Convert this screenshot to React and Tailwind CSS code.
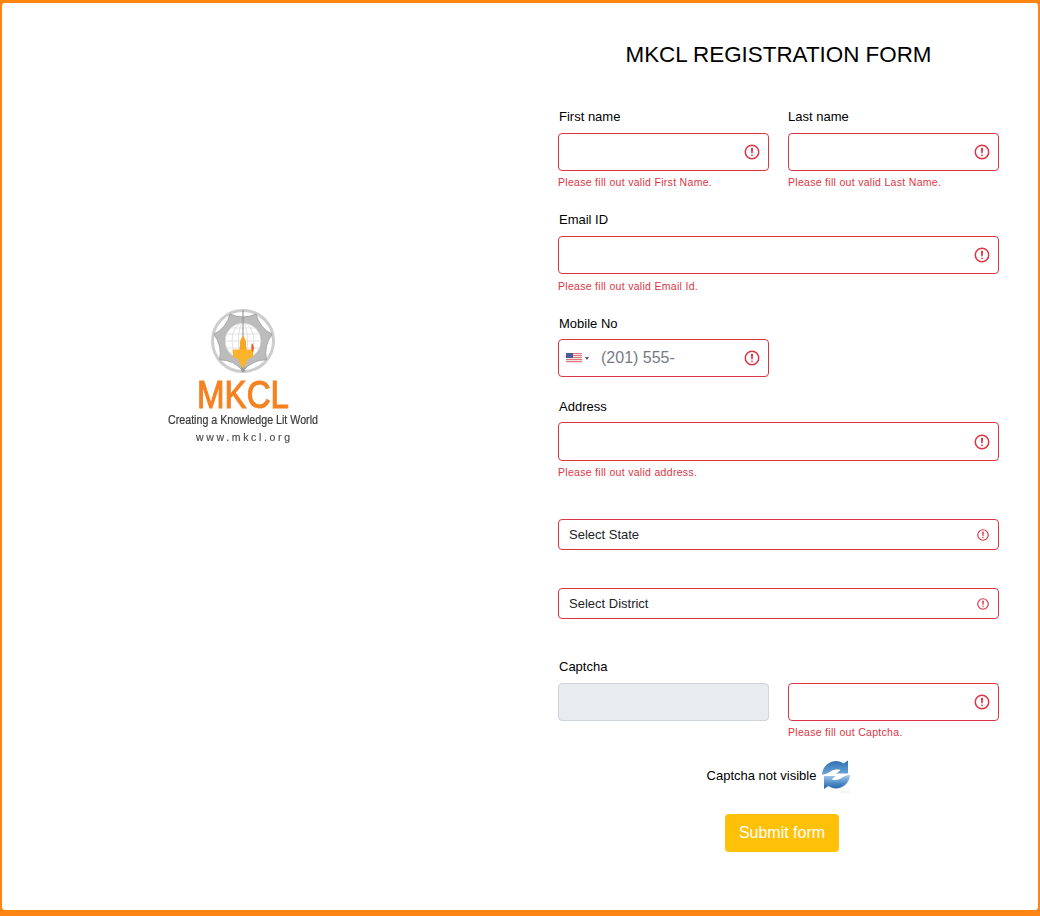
import React from "react";

const ErrIcon = ({ size = 18 }) => (
  <svg width={size} height={size} viewBox="0 0 12 12" fill="none" stroke="#dc3545" className="shrink-0">
    <circle cx="6" cy="6" r="4.5" />
    <path strokeLinejoin="round" d="M5.8 3.6h.4L6 6.5z" />
    <circle cx="6" cy="8.2" r=".6" fill="#dc3545" stroke="none" />
  </svg>
);

const Label = ({ children, className = "pl-px" }) => (
  <label className={"block h-[21px] text-[13px] leading-[21px] text-black " + className}>{children}</label>
);

const Err = ({ children, className = "mt-[3px]" }) => (
  <div className={"h-4 text-[10.5px] leading-4 tracking-[0.3px] text-[#dc3545] " + className}>{children}</div>
);

const Input = ({ className = "h-[38px]" }) => (
  <div className={"flex items-center rounded border border-[#dc3545] bg-white pl-3 pr-[7.5px] " + className}>
    <input className="min-w-0 flex-1 bg-transparent text-[16px] outline-none" aria-label="field" />
    <ErrIcon />
  </div>
);

const SelectBox = ({ children, className = "" }) => (
  <div className={"flex h-[31px] items-center justify-between rounded border border-[#dc3545] bg-white pl-[10px] pr-[8px] text-[13px] text-[#212529] " + className}>
    <span>{children}</span>
    <ErrIcon size={14} />
  </div>
);

const Flag = () => (
  <svg width="16" height="10" viewBox="0 0 16 10" className="shrink-0">
    <rect width="16" height="10" fill="#f6e3e3" />
    {[0, 2, 4, 6, 8].map((y) => (
      <rect key={y} y={y} width="16" height="1" fill="#d9787c" />
    ))}
    <rect width="7" height="5" fill="#4d5c94" />
  </svg>
);

const star = (() => {
  const n = 7;
  let d = "";
  for (let i = 0; i < n; i++) {
    const a = ((90 + (i * 360) / n) * Math.PI) / 180;
    const b = ((90 + ((i + 0.5) * 360) / n) * Math.PI) / 180;
    const b2 = ((90 + ((i + 1) * 360) / n) * Math.PI) / 180;
    const p = (ang, r) => (r * Math.cos(ang)).toFixed(1) + " " + (r * Math.sin(ang)).toFixed(1);
    if (i === 0) d += "M" + p(a, 30);
    d += "Q" + p(b, 21) + " " + p(b2, 30);
  }
  return d + "Z";
})();

const Logo = () => (
  <svg width="160" height="140" viewBox="163 305 160 140" className="blur-[0.4px]">
    <g transform="translate(243 341)">
      <circle r="30.5" fill="#fff" stroke="#cdcdcd" strokeWidth="3" />
      <path d={star} fill="#bcbcbc" stroke="#9a9a9a" strokeWidth="0.8" strokeLinejoin="round" />
      <circle r="18" fill="#fff" stroke="#b0b0b0" strokeWidth="0.5" />
      <g fill="none" stroke="#dedede" strokeWidth="0.9">
        <ellipse rx="11" ry="18" />
        <ellipse rx="4.500" ry="18" />
        <path d="M-17-7H17M-18 0H18M-17 7H17M-12-13H12" />
      </g>
      <path d="M0-31V-4" stroke="#8a8a8a" strokeWidth="1" />
      <path d="M0 14V31" stroke="#999" strokeWidth="3" />
      <path d="M-1-4.500C-1.500-2-3.500-1-3 3-2.500 5-4 7-3.500 9H3.500C4 7 2.500 5 3 3 3.500-1 1.500-2 1-4.500Z" fill="#f7a823" />
      <path d="M-10.500 8.500H10.500L10 16 5 18 2.500 23.500 0 27.500-2.500 23.500-5 18-10 16Z" fill="#fbb32c" />
      <path d="M9 2C11 5 11.500 8 9.800 11 8 9 7.800 5.500 9 2Z" fill="#e8562a" />
    </g>
    <text x="197" y="408" fontSize="39" fill="#f58220" stroke="#f58220" strokeWidth="1.1" textLength="92" lengthAdjust="spacingAndGlyphs">MKCL</text>
    <text x="168" y="424" fontSize="12" fill="#3a3a3a" stroke="#3a3a3a" strokeWidth="0.2" textLength="150" lengthAdjust="spacingAndGlyphs">Creating a Knowledge Lit World</text>
    <text x="196" y="441" fontSize="10.500" fill="#4a4a4a" stroke="#4a4a4a" strokeWidth="0.15" textLength="94">www.mkcl.org</text>
  </svg>
);

const Refresh = () => (
  <svg width="30" height="33" viewBox="0 0 30 33" className="shrink-0">
    <defs>
      <linearGradient id="rt" x1="0" y1="0" x2="0" y2="1">
        <stop offset="0" stopColor="#2f6fb0" />
        <stop offset="1" stopColor="#6fa6d8" />
      </linearGradient>
      <linearGradient id="rb" x1="0" y1="0" x2="0" y2="1">
        <stop offset="0" stopColor="#a9cbea" />
        <stop offset="0.6" stopColor="#4c8ac6" />
        <stop offset="1" stopColor="#2a65a6" />
      </linearGradient>
    </defs>
    <path d="M1 14.500C1.500 6 9 1 15 1 18 1 20.500 2 22.500 3.500L27 0.500V13.500H15.500L19.500 10C17 9 12 9.500 9.500 11.500 7.500 13 5 14.500 1 14.500Z" fill="url(#rt)" />
    <path d="M29 15C28.500 23.500 21 28.500 15 28.500 12 28.500 9.500 27.500 7.500 26L3 29V16H14.500L10.500 19.500C13 20.500 18 20 20.500 18 22.500 16.500 25 15 29 15Z" fill="url(#rb)" />
    <path d="M20 32h9" stroke="#e8e8e8" strokeWidth="1" />
  </svg>
);

export default function App() {
  return (
    <div className="h-[916px] w-[1040px] bg-[#ff8513] pb-[6px] pl-[2px] pr-[2px] pt-[3px] font-['Liberation_Sans',Arial,sans-serif]">
      <div className="flex h-full rounded-[3px] bg-white">
        <div className="flex w-[482px] shrink-0 justify-center pt-[302px]">
          <div className="h-[140px]">
            <Logo />
          </div>
        </div>
        <form className="ml-[74px] w-[441px] pt-[39px]">
          <h1 className="h-[26px] text-center text-[22.4px] font-normal leading-[26px] text-black">MKCL REGISTRATION FORM</h1>

          <div className="mt-[38px] grid grid-cols-2 gap-x-[19px]">
            <div>
              <Label className="mb-[6px] pl-px">First name</Label>
              <Input />
              <Err>Please fill out valid First Name.</Err>
            </div>
            <div>
              <Label className="mb-[6px]">Last name</Label>
              <Input />
              <Err>Please fill out valid Last Name.</Err>
            </div>
          </div>

          <div className="mt-[19px]">
            <Label className="mb-[6px] pl-px">Email ID</Label>
            <Input />
            <Err className="mt-[4px]">Please fill out valid Email Id.</Err>
          </div>

          <div className="mt-[19px]">
            <Label className="mb-[5px] pl-px">Mobile No</Label>
            <div className="flex h-[38px] w-[211px] items-center rounded border border-[#dc3545] bg-white pl-[7px] pr-[7.5px]">
              <Flag />
              <span className="ml-[3px] h-0 w-0 border-x-[2.5px] border-t-[3px] border-x-transparent border-t-[#555]" />
              <span className="ml-[12px] flex-1 text-[16px] text-[#757b82]">(201) 555-</span>
              <ErrIcon />
            </div>
          </div>

          <div className="mt-[19px]">
            <Label className="mb-[5px] pl-px">Address</Label>
            <Input className="h-[39px]" />
            <Err>Please fill out valid address.</Err>
          </div>

          <SelectBox className="mt-[39px]">Select State</SelectBox>
          <SelectBox className="mt-[38px]">Select District</SelectBox>

          <div className="mt-[37px] grid grid-cols-2 gap-x-[19px]">
            <div>
              <Label className="mb-[6px] pl-px">Captcha</Label>
              <div className="h-[38px] rounded border border-[#ced4da] bg-[#e9ecef]" />
            </div>
            <div className="pt-[27px]">
              <Input />
              <Err>Please fill out Captcha.</Err>
            </div>
          </div>

          <div className="mt-[20px] flex h-[33px] items-center justify-center gap-[5px] pl-[1px]">
            <span className="pb-[2px] text-[13px] text-black">Captcha not visible</span>
            <Refresh />
          </div>

          <div className="mt-[21px] flex justify-center pl-[7px]">
            <button type="button" className="h-[38px] w-[114px] rounded bg-[#ffc107] text-[16px] text-white">Submit form</button>
          </div>
        </form>
      </div>
    </div>
  );
}
